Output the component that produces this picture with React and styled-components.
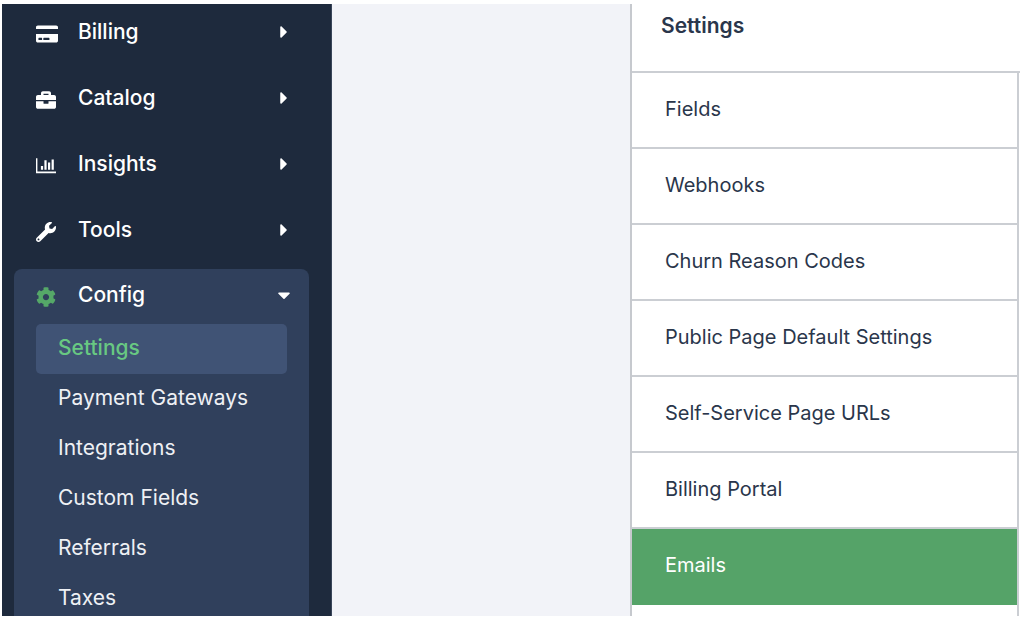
import styled, { createGlobalStyle } from 'styled-components';
import {
	FaBriefcase,
	FaCaretDown,
	FaCaretRight,
	FaCog,
	FaCreditCard,
	FaWrench,
} from 'react-icons/fa';

const GlobalStyle = createGlobalStyle`
	*, *::before, *::after {
		box-sizing: border-box;
	}

	body {
		margin: 0;
		background-color: #fff;
		color: #2a364b;
		font-family: Inter, 'Liberation Sans', sans-serif;
		font-size: 20px;
		line-height: 28px;
	}
`;

const Page = styled.div`
	display: flex;
	height: 100vh;
	padding: 4px 0 4px 2px;
`;

const Sidebar = styled.nav`
	flex: 0 0 330px;
	display: flex;
	flex-direction: column;
	padding: 14px 22px 0 12px;
	background-color: #1e2a3d;
	border-right: 1px solid #3a465a;
	font-size: 21px;
	overflow: hidden;
`;

const MenuList = styled.div`
	display: flex;
	flex-direction: column;
	gap: 38px;
	margin-bottom: 25px;
`;

const MenuButton = styled.button`
	display: flex;
	align-items: center;
	width: 100%;
	height: ${({ $open }) => ($open ? '52px' : '28px')};
	padding: 0 15px 0 22px;
	border: 0;
	background: none;
	color: #fff;
	font: inherit;
	font-weight: 500;
	text-align: left;
	cursor: pointer;

	& > svg {
		width: 20px;
		height: 20px;
	}
`;

const MenuIcon = styled.span`
	display: flex;
	width: 42px;
	padding-top: 3px;
	color: ${({ $active }) => ($active ? '#55a868' : '#fff')};

	& > svg {
		width: ${({ $wide }) => ($wide ? '22px' : '20px')};
		height: 20px;
	}
`;

const MenuLabel = styled.span`
	flex: 1;
`;

const Group = styled.div`
	flex: 1 0 auto;
	background-color: #30405c;
	border-radius: 8px 8px 0 0;
`;

const SubMenu = styled.ul`
	list-style: none;
	margin: 0;
	padding: 3px 22px 0;
`;

const SubLink = styled.a`
	display: block;
	padding: 10px 22px 12px;
	border-radius: 5px;
	background-color: ${({ $active }) => ($active ? '#405375' : 'transparent')};
	color: ${({ $active }) => ($active ? '#68c882' : '#eef0f4')};
	font-weight: ${({ $active }) => ($active ? 500 : 400)};
	text-decoration: none;
`;

const Gutter = styled.div`
	flex: 0 0 298px;
	background-color: #f2f3f8;
`;

const Panel = styled.main`
	flex: 1;
	display: flex;
	flex-direction: column;
	border-left: 2px solid #c6c9ce;
	overflow: hidden;
`;

const PanelTitle = styled.h1`
	margin: 0;
	padding: 8px 29px 31px;
	border-bottom: 2px solid #cbced3;
	font-size: 21px;
	font-weight: 600;
`;

const SettingsList = styled.ul`
	flex: 1 0 auto;
	list-style: none;
	margin: 0 1px 0 0;
	padding: 0;
	border-right: 2px solid #cbced3;
`;

const SettingsLink = styled.a`
	display: block;
	padding: 22px 33px 24px;
	border-bottom: 2px solid ${({ $active }) => ($active ? '#55a368' : '#cbced3')};
	background-color: ${({ $active }) => ($active ? '#55a368' : '#fff')};
	color: ${({ $active }) => ($active ? '#fff' : 'inherit')};
	text-decoration: none;
`;

const ChartIcon = () => (
	<svg viewBox="0 0 20 20" fill="currentColor" aria-hidden="true">
		<path d="M0 2.2h1.4v13.4H20v1.6H0z" />
		<path d="M4.9 10h2.2v3.8H4.9zM8.4 4.3h2.2v9.5H8.4zM12 6.6h2.2v7.2H12zM15.6 3.4h2.2v10.4h-2.2z" />
	</svg>
);

const menu = [
	{ label: 'Billing', Icon: FaCreditCard, wide: true },
	{ label: 'Catalog', Icon: FaBriefcase },
	{ label: 'Insights', Icon: ChartIcon },
	{ label: 'Tools', Icon: FaWrench },
];

const configLinks = [
	'Settings',
	'Payment Gateways',
	'Integrations',
	'Custom Fields',
	'Referrals',
	'Taxes',
];

const settings = [
	'Fields',
	'Webhooks',
	'Churn Reason Codes',
	'Public Page Default Settings',
	'Self-Service Page URLs',
	'Billing Portal',
	'Emails',
];

const MenuItem = ({ label, Icon, wide, open }) => (
	<MenuButton type="button" aria-expanded={Boolean(open)} $open={open}>
		<MenuIcon $active={open} $wide={wide}>
			<Icon />
		</MenuIcon>
		<MenuLabel>{label}</MenuLabel>
		{open ? <FaCaretDown /> : <FaCaretRight />}
	</MenuButton>
);

const App = () => (
	<>
		<GlobalStyle />
		<Page>
			<Sidebar>
				<MenuList>
					{menu.map((item) => (
						<MenuItem key={item.label} {...item} />
					))}
				</MenuList>
				<Group>
					<MenuItem label="Config" Icon={FaCog} open />
					<SubMenu>
						{configLinks.map((label) => (
							<li key={label}>
								<SubLink href="#" $active={label === 'Settings'}>
									{label}
								</SubLink>
							</li>
						))}
					</SubMenu>
				</Group>
			</Sidebar>
			<Gutter />
			<Panel>
				<PanelTitle>Settings</PanelTitle>
				<SettingsList>
					{settings.map((label) => (
						<li key={label}>
							<SettingsLink href="#" $active={label === 'Emails'}>
								{label}
							</SettingsLink>
						</li>
					))}
				</SettingsList>
			</Panel>
		</Page>
	</>
);

export default App;
